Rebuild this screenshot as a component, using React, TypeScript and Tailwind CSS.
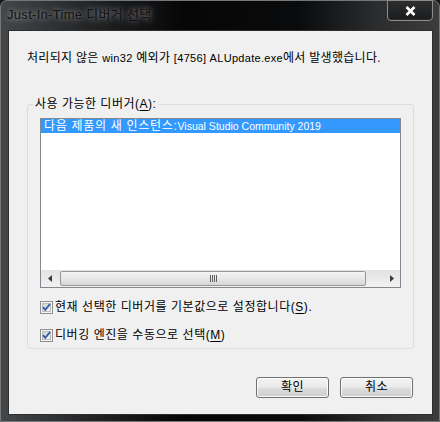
import React from 'react';

function CheckBox() {
  return (
    <svg width="13" height="13" viewBox="0 0 13 13" className="shrink-0">
      <defs>
        <linearGradient id="cbg" x1="0" y1="0" x2="1" y2="1">
          <stop offset="0" stopColor="#cbcfd5" />
          <stop offset="1" stopColor="#f6f6f6" />
        </linearGradient>
      </defs>
      <rect x="0.5" y="0.5" width="12" height="12" fill="#f4f4f4" stroke="#8e8f8f" />
      <rect x="2.5" y="2.5" width="8" height="8" fill="url(#cbg)" stroke="#b9bcc2" />
      <path d="M3 6.2 L5.3 8.8 L10 3" fill="none" stroke="#3c59a3" strokeWidth="1.9" />
    </svg>
  );
}

function Arrow({ dir }: { dir: 'left' | 'right' }) {
  return (
    <svg width="4" height="7" viewBox="0 0 4 7">
      {dir === 'left' ? <path d="M4 0 L0 3.5 L4 7 Z" fill="#3a3a3a" /> : <path d="M0 0 L4 3.5 L0 7 Z" fill="#3a3a3a" />}
    </svg>
  );
}

function Btn({ label }: { label: string }) {
  return (
    <button className="w-[73px] h-[21px] rounded-[3px] border border-[#707070] bg-[linear-gradient(180deg,#f2f2f2_0%,#ebebeb_48%,#dddddd_52%,#cfcfcf_100%)] shadow-[inset_0_0_0_1px_#fcfcfc] text-[12px] leading-[19px] tracking-[0.5px] text-black">
      {label}
    </button>
  );
}

export default function App() {
  return (
    <div className="w-[440px] h-[422px] bg-[#1a1a1a] font-['Liberation_Sans','Noto_Sans_CJK_KR',sans-serif]">
      <div className="relative w-full h-full rounded-t-[7px] border border-[#767676] bg-[linear-gradient(90deg,#44474a_0%,#222426_20%,#060607_42%,#0a0b0c_68%,#2b2d2f_86%,#3a3c3e_100%)] flex flex-col">
        {/* title bar */}
        <div className="h-[29px] flex items-center pl-[6px] pb-[1px]">
          <span className="text-[13px] tracking-[0.3px] text-[#111111] [text-shadow:0_0_5px_rgba(255,255,255,0.5),0_0_12px_rgba(255,255,255,0.3)]">
            Just-In-Time 디버거 선택
          </span>
        </div>
        <div className="absolute right-[6px] -top-px w-[46px] h-[21px] rounded-b-[4px] border border-[#8c8c8c] bg-[linear-gradient(180deg,#2c2e30,#1a1b1c)] shadow-[inset_0_0_0_1px_#2a2a2a] flex items-center justify-center">
          <svg width="11" height="10" viewBox="0 0 11 10">
            <path d="M1.5 1 L9.5 9 M9.5 1 L1.5 9" stroke="#ffffff" strokeWidth="2.6" />
          </svg>
        </div>

        {/* client area */}
        <div className="ml-[7px] mr-[6px] h-[385px] bg-[#f0f0f0] border border-[#2d2d2d] pl-[18px] pr-[18px] pt-[19px] text-black">
          <p className="text-[12px] leading-[16px] tracking-[0.3px] whitespace-nowrap">
            처리되지 않은 <span className="text-[11px]">win32</span> 예외가 <span className="text-[11px]">[4756] ALUpdate.exe</span>에서 발생했습니다.
          </p>

          <div className="relative mt-[38px] h-[245px] rounded-[3px] border border-[#d5dfe5] px-[12px] pt-[13px]">
            <span className="absolute left-[5px] -top-[9px] px-[2px] bg-[#f0f0f0] text-[12px] leading-[16px] tracking-[0.5px]">
              사용 가능한 디버거(<span className="underline underline-offset-2">A</span>):
            </span>

            <div className="h-[170px] border border-[#828790] bg-white flex flex-col">
              <div className="flex-1">
                <div className="h-[14px] bg-[#3399ff] text-white text-[12px] leading-[14px] pl-[3px] whitespace-nowrap">
                  <span className="tracking-[0.7px]">다음 제품의 새 인스턴스:</span>
                  <span className="text-[10.5px]">Visual Studio Community 2019</span>
                </div>
              </div>
              <div className="h-[17px] flex items-stretch bg-[linear-gradient(180deg,#e3e3e3,#f1f1f1)]">
                <div className="w-[17px] flex items-center justify-center">
                  <Arrow dir="left" />
                </div>
                <div className="flex-1 flex items-stretch pl-[2px] pr-[17px] py-px">
                  <div className="w-[306px] rounded-[2px] border border-[#979797] bg-[linear-gradient(180deg,#f3f3f3_0%,#e8e8e8_50%,#d6d6d6_100%)] flex items-center justify-center gap-[1px]">
                    <span className="w-px h-[7px] bg-[#5e5e5e]" />
                    <span className="w-px h-[7px] bg-[#5e5e5e]" />
                    <span className="w-px h-[7px] bg-[#5e5e5e]" />
                    <span className="w-px h-[7px] bg-[#5e5e5e]" />
                  </div>
                </div>
                <div className="w-[17px] flex items-center justify-center">
                  <Arrow dir="right" />
                </div>
              </div>
            </div>

            <div className="mt-[11px] flex items-center gap-[2px] h-[16px] text-[12px] leading-[16px] tracking-[0.55px] whitespace-nowrap">
              <CheckBox />
              <span>
                현재 선택한 디버거를 기본값으로 설정합니다(<span className="underline underline-offset-2">S</span>).
              </span>
            </div>
            <div className="mt-[12px] flex items-center gap-[2px] h-[16px] text-[12px] leading-[16px] tracking-[0.55px] whitespace-nowrap">
              <CheckBox />
              <span>
                디버깅 엔진을 수동으로 선택(<span className="underline underline-offset-2">M</span>)
              </span>
            </div>
          </div>

          <div className="mt-[28px] flex justify-end gap-[11px] pr-px">
            <Btn label="확인" />
            <Btn label="취소" />
          </div>
        </div>
      </div>
    </div>
  );
}
